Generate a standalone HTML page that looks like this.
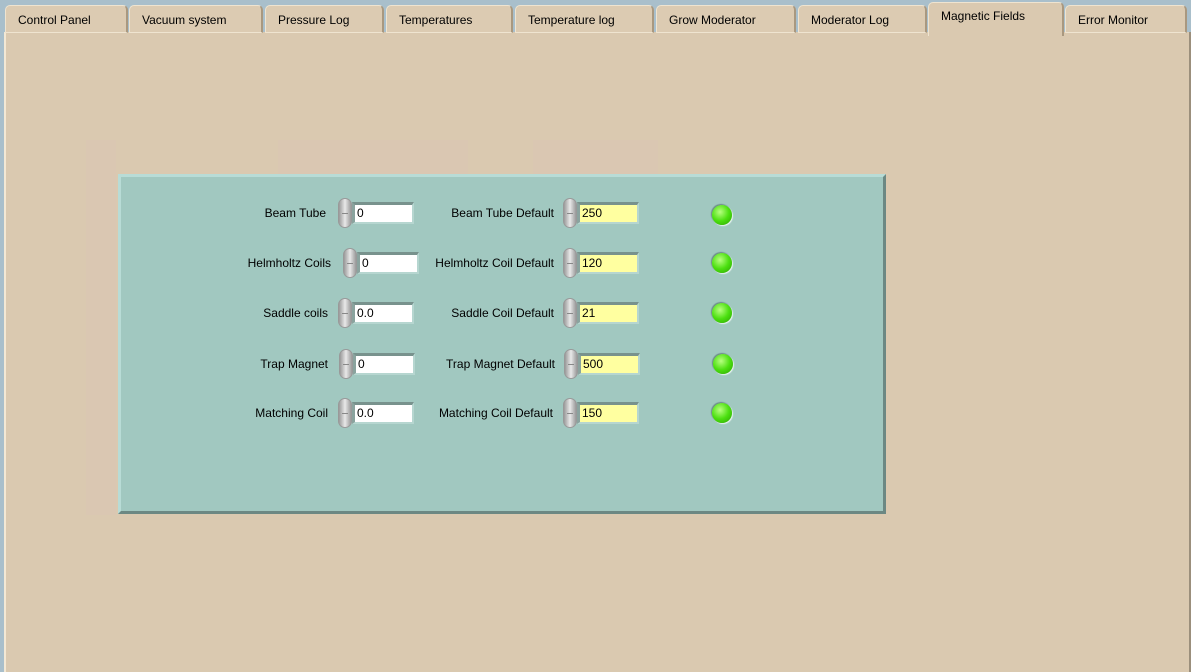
<!DOCTYPE html>
<html><head><style>
body{margin:0;width:1191px;height:665px;background:#a9bfcb;position:relative;overflow:hidden;font-family:"Liberation Sans",sans-serif;font-size:12px;color:#000}
.page{position:absolute;left:4px;top:32px;width:1183px;height:640px;background:#dac9b0;border-left:2px solid #f3e8d4;border-right:3px solid #9b8f7c}
.tab{position:absolute;top:5px;height:28px;background:#dccbb2;border:1px solid #efe4d0;border-right:2px solid #a9987f;border-radius:5px 5px 0 0;box-sizing:border-box;padding:7px 0 0 12px;font-size:12px}
.tab.sel{top:2px;height:34px;padding-top:6px;z-index:2;background:#dac9b0;border-bottom:none}
.ghost{position:absolute;background:#dac7b2}
.panel{position:absolute;left:118px;top:174px;width:768px;height:340px;background:#a1c8c0;box-sizing:border-box;border-top:3px solid #b8dcd6;border-left:3px solid #b8dcd6;border-right:3px solid #6c8883;border-bottom:3px solid #6c8883}
.lbl{position:absolute;text-align:right;width:200px}
.spin{position:absolute;width:14px;height:30px;border-radius:7px;background:linear-gradient(90deg,#9a9a9a,#e8e8e8 50%,#9a9a9a);box-sizing:border-box;border:1px solid #999}
.spin:after{content:"";position:absolute;left:3px;right:3px;top:14px;height:1px;background:#888}
.box{position:absolute;height:22px;width:62px;box-sizing:border-box;border-top:3px solid #78928d;border-left:3px solid #8aa39e;border-right:2px solid #b6d6d0;border-bottom:2px solid #b6d6d0;padding-left:2px;line-height:17px}
.w{background:#fff}.y{background:#ffffa0}
.led{position:absolute;width:20px;height:20px;border-radius:50%;background:radial-gradient(circle at 40% 35%,#b8ff80,#4ce010 50%,#2aa000);box-shadow:1px 1px 1px #e8f4f0,-1px -1px 1px #6a8a84}
</style></head><body>
<div class="page"></div>
<div class="tab" style="left:5px;width:123px">Control Panel</div>
<div class="tab" style="left:129px;width:134px">Vacuum system</div>
<div class="tab" style="left:265px;width:119px">Pressure Log</div>
<div class="tab" style="left:386px;width:127px">Temperatures</div>
<div class="tab" style="left:515px;width:139px">Temperature log</div>
<div class="tab" style="left:656px;width:140px">Grow Moderator</div>
<div class="tab" style="left:798px;width:129px">Moderator Log</div>
<div class="tab sel" style="left:928px;width:136px">Magnetic Fields</div>
<div class="tab" style="left:1065px;width:122px">Error Monitor</div>
<div class="ghost" style="left:86px;top:140px;width:30px;height:375px"></div>
<div class="ghost" style="left:278px;top:140px;width:190px;height:34px"></div>
<div class="ghost" style="left:533px;top:140px;width:125px;height:34px"></div>
<div class="panel"></div>

<div class="lbl" style="left:126px;top:206px">Beam Tube</div>
<div class="spin" style="left:338px;top:198px"></div>
<div class="box w" style="left:352px;top:202px">0</div>
<div class="lbl" style="left:354px;top:206px">Beam Tube Default</div>
<div class="spin" style="left:563px;top:198px"></div>
<div class="box y" style="left:577px;top:202px">250</div>
<div class="led" style="left:712px;top:205px"></div>

<div class="lbl" style="left:131px;top:256px">Helmholtz Coils</div>
<div class="spin" style="left:343px;top:248px"></div>
<div class="box w" style="left:357px;top:252px">0</div>
<div class="lbl" style="left:354px;top:256px">Helmholtz Coil Default</div>
<div class="spin" style="left:563px;top:248px"></div>
<div class="box y" style="left:577px;top:252px">120</div>
<div class="led" style="left:712px;top:253px"></div>

<div class="lbl" style="left:128px;top:306px">Saddle coils</div>
<div class="spin" style="left:338px;top:298px"></div>
<div class="box w" style="left:352px;top:302px">0.0</div>
<div class="lbl" style="left:354px;top:306px">Saddle Coil Default</div>
<div class="spin" style="left:563px;top:298px"></div>
<div class="box y" style="left:577px;top:302px">21</div>
<div class="led" style="left:712px;top:303px"></div>

<div class="lbl" style="left:128px;top:357px">Trap Magnet</div>
<div class="spin" style="left:339px;top:349px"></div>
<div class="box w" style="left:353px;top:353px">0</div>
<div class="lbl" style="left:355px;top:357px">Trap Magnet Default</div>
<div class="spin" style="left:564px;top:349px"></div>
<div class="box y" style="left:578px;top:353px">500</div>
<div class="led" style="left:713px;top:354px"></div>

<div class="lbl" style="left:128px;top:406px">Matching Coil</div>
<div class="spin" style="left:338px;top:398px"></div>
<div class="box w" style="left:352px;top:402px">0.0</div>
<div class="lbl" style="left:353px;top:406px">Matching Coil Default</div>
<div class="spin" style="left:563px;top:398px"></div>
<div class="box y" style="left:577px;top:402px">150</div>
<div class="led" style="left:712px;top:403px"></div>
</body></html>
